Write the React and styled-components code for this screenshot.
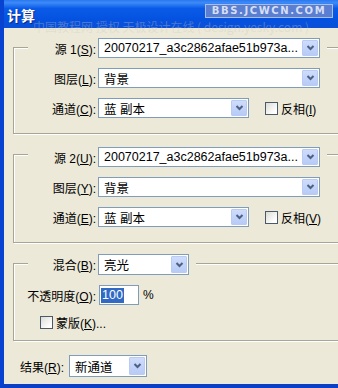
import React from 'react';
import styled, { createGlobalStyle } from 'styled-components';


const GlobalStyle = createGlobalStyle`
	html, body {
		margin: 0;
		padding: 0;
		overflow: hidden;
		background: #ece9d8;
	}
	body {
		font-family: "Liberation Sans", "Noto Sans CJK SC", sans-serif;
		font-size: 12px;
		color: #000;
	}
`


function Chevron() {
  return (
    <svg width="9" height="6" viewBox="0 0 9 6">
      <polyline points="1.5,1 4.5,4 7.5,1" fill="none" stroke="#4d6185" strokeWidth="2" />
    </svg>
  );
}


// Liste déroulante façon XP
function Combo({ width, height, children }) {
  return (
    <ComboBox $width={width} $height={height}>
      <ComboText>{children}</ComboText>
      <DropButton>
        <Chevron />
      </DropButton>
    </ComboBox>
  );
}


function App() {
  return (
    <Window>
      <GlobalStyle />

      <TitleBar>
        <Title>计算</Title>
        <Stamp>BBS.JCWCN.COM</Stamp>
      </TitleBar>

      <Watermark>中国教程网 授权 天极设计在线 ( design.yesky.com )</Watermark>

      <Client>
        {/* Source 1 */}
        <Group $top={19} $pad={15}>
          <Row $lift={10}>
            <Legend>
              <Label $width={68}>源 1(<U>S</U>):</Label>
              <Combo width={222}>20070217_a3c2862afae51b973a...</Combo>
            </Legend>
          </Row>
          <Row>
            <Label>图层(<U>L</U>):</Label>
            <Combo width={222}>背景</Combo>
          </Row>
          <Row>
            <Label>通道(<U>C</U>):</Label>
            <Combo width={151}>蓝 副本</Combo>
            <Check>
              <Box />
              <span>反相(<U>I</U>)</span>
            </Check>
          </Row>
        </Group>

        {/* Source 2 */}
        <Group $top={20} $pad={15}>
          <Row $lift={8}>
            <Legend>
              <Label $width={68}>源 2(<U>U</U>):</Label>
              <Combo width={222}>20070217_a3c2862afae51b973a...</Combo>
            </Legend>
          </Row>
          <Row>
            <Label>图层(<U>Y</U>):</Label>
            <Combo width={222}>背景</Combo>
          </Row>
          <Row>
            <Label>通道(<U>E</U>):</Label>
            <Combo width={151}>蓝 副本</Combo>
            <Check>
              <Box />
              <span>反相(<U>V</U>)</span>
            </Check>
          </Row>
        </Group>

        {/* Mélange */}
        <Group $top={20} $pad={11}>
          <Row $lift={10} $height={21}>
            <Legend>
              <Label $width={68}>混合(<U>B</U>):</Label>
              <Combo width={91} height={21}>亮光</Combo>
            </Legend>
          </Row>
          <Row $gap={10}>
            <Label>不透明度(<U>O</U>):</Label>
            <NumberField><Selected>100</Selected></NumberField>
            <Percent>%</Percent>
          </Row>
          <Row $gap={10} $height={14}>
            <Check $indent={26}>
              <Box />
              <span>蒙版(<U>K</U>)...</span>
            </Check>
          </Row>
        </Group>

        <ResultRow>
          <ResultLabel>结果(<U>R</U>):</ResultLabel>
          <Combo width={78} height={22}>新通道</Combo>
        </ResultRow>
      </Client>
    </Window>
  );
}




// CSS ----------------------------------------------------------------

const Window = styled.div`
	position: relative;
	width: 338px;
	height: 388px;
	box-sizing: border-box;
	overflow: hidden;
	background: #ece9d8;
	border-left: 4px solid #0842d0;
	border-bottom: 4px solid #0a3fc6;
	display: flex;
	flex-direction: column;
`

const TitleBar = styled.div`
	height: 28px;
	margin-left: -4px;
	padding: 0 5px 0 7px;
	display: flex;
	align-items: center;
	justify-content: space-between;
	background: linear-gradient(#2a78f0 0%, #3d8af7 10%, #0a5ae8 30%, #0552e0 70%, #0a4fd6 100%);
`

const Title = styled.div`
	color: #fff;
	font-family: "Noto Sans CJK SC", sans-serif;
	font-weight: bold;
	font-size: 14px;
	text-shadow: 1px 1px 0 #0a2a8a;
	margin-top: 1px;
`

const Stamp = styled.div`
	width: 128px;
	height: 14px;
	box-sizing: border-box;
	margin-top: -6px;
	border: 1px solid #a9bdea;
	background: #5a7fd2;
	color: #d6def2;
	font-family: "DejaVu Sans", sans-serif;
	font-weight: bold;
	font-size: 10px;
	letter-spacing: 1.6px;
	line-height: 12px;
	text-align: center;
`

const Watermark = styled.div`
	position: absolute;
	left: 29px;
	top: 20px;
	font-family: "Noto Sans CJK SC", sans-serif;
	font-size: 12px;
	line-height: 14px;
	color: rgba(200, 198, 190, 0.35);
	white-space: nowrap;
	pointer-events: none;
`

const Client = styled.div`
	display: flex;
	flex-direction: column;
	padding-left: 9px;
`

const Group = styled.div`
	margin-top: ${(p) => p.$top}px;
	width: 360px;
	padding-bottom: ${(p) => p.$pad}px;
	border: 1px solid #a7a596;
	box-shadow: inset 1px 1px 0 #fff, 1px 1px 0 #fff;
	display: flex;
	flex-direction: column;
`

const Row = styled.div`
	display: flex;
	align-items: center;
	height: ${(p) => p.$height || 20}px;
	margin-top: ${(p) => (p.$lift ? -p.$lift : p.$gap || 10)}px;
`

// Bloc d'en-tête posé sur le trait du cadre
const Legend = styled.div`
	display: flex;
	align-items: center;
	height: 100%;
	margin-left: 14px;
	padding-right: 7px;
	background: #ece9d8;
`

const Label = styled.div`
	width: ${(p) => p.$width || 82}px;
	text-align: right;
	margin-right: 2px;
	white-space: nowrap;
`

const U = styled.span`
	text-decoration: underline;
`

const ComboBox = styled.div`
	width: ${(p) => p.$width}px;
	height: ${(p) => p.$height || 20}px;
	box-sizing: border-box;
	border: 1px solid #7f9db9;
	background: #fff;
	display: flex;
	align-items: center;
	justify-content: space-between;
	padding: 1px 1px 1px 5px;
`

const ComboText = styled.span`
	font-size: 12.5px;
	white-space: nowrap;
	overflow: hidden;
`

const DropButton = styled.div`
	width: 16px;
	height: 100%;
	box-sizing: border-box;
	border: 1px solid #b9cbf5;
	border-radius: 1px;
	background: linear-gradient(#cfdcfb, #b7cbf6);
	display: flex;
	align-items: center;
	justify-content: center;
	flex-shrink: 0;
`

const Check = styled.label`
	display: flex;
	align-items: center;
	gap: 3px;
	margin-left: ${(p) => (p.$indent !== undefined ? p.$indent : 16)}px;
	white-space: nowrap;
`

const Box = styled.span`
	width: 13px;
	height: 13px;
	box-sizing: border-box;
	border: 1px solid #4a5a68;
	background: linear-gradient(135deg, #dcdcd5, #fff 80%);
`

const NumberField = styled.div`
	width: 40px;
	height: 20px;
	box-sizing: border-box;
	margin-left: 1px;
	border: 1px solid #7f9db9;
	background: #fff;
	display: flex;
	align-items: center;
	padding-left: 1px;
`

const Selected = styled.span`
	background: #316ac5;
	color: #fff;
	font-size: 12.5px;
	line-height: 15px;
	padding: 0 1px;
`

const Percent = styled.span`
	margin-left: 4px;
`

const ResultRow = styled.div`
	display: flex;
	align-items: center;
	margin-top: 14px;
	padding-left: 7px;
`

const ResultLabel = styled.div`
	width: 49px;
	white-space: nowrap;
`


export default App;
